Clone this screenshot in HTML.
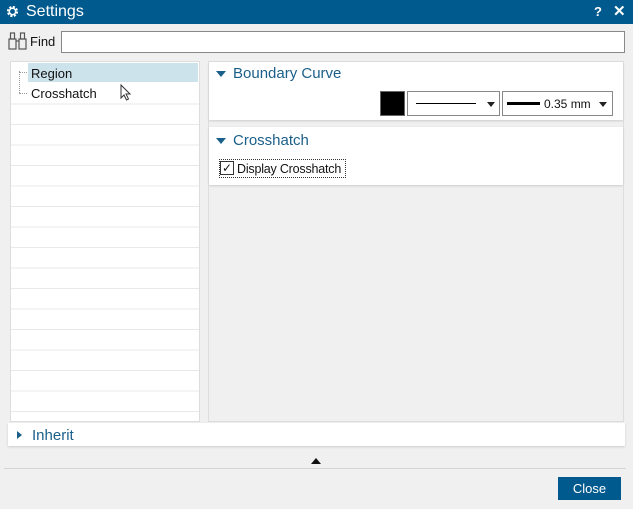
<!DOCTYPE html><html><head><style>
*{box-sizing:border-box;margin:0;padding:0}
body{width:633px;height:509px;background:#f0f0f0;font-family:"Liberation Sans",sans-serif;position:relative;overflow:hidden;font-size:12px;color:#111}
.a{position:absolute}
</style></head><body>
<div class="a" style="left:0;top:0;width:633px;height:24px;background:#005a8e;color:#fff">
<svg class="a" style="left:6px;top:5px" width="13" height="13" viewBox="0 0 13 13"><circle cx="6.5" cy="6.5" r="4.3" fill="none" stroke="#fff" stroke-width="2.6" stroke-dasharray="2 1.4"/><circle cx="6.5" cy="6.5" r="3.2" fill="none" stroke="#fff" stroke-width="1.5"/></svg>
<div class="a" style="left:26px;top:3px;font-size:16px">Settings</div>
<div class="a" style="left:594px;top:4px;font-size:13px;font-weight:bold">?</div>
<div class="a" style="left:613px;top:2px;font-size:15px;font-weight:bold">✕</div>
</div>
<svg class="a" style="left:8px;top:31px" width="20" height="19" viewBox="0 0 20 19" fill="none" stroke="#555" stroke-width="1.2"><rect x="1" y="8" width="7" height="10"/><rect x="11" y="8" width="7" height="10"/><rect x="2.5" y="2" width="4" height="6"/><rect x="12.5" y="2" width="4" height="6"/><path d="M8 10h3"/></svg>
<div class="a" style="left:30px;top:34px;font-size:13px">Find</div>
<div class="a" style="left:61px;top:31px;width:564px;height:22px;background:#fff;border:1px solid #888"></div>
<div class="a" style="left:10px;top:61px;width:190px;height:361px;background:#fff;border:1px solid #ddd;background-image:repeating-linear-gradient(#fff 0 19.5px,#e8e8e8 19.5px 20.5px);background-position:0 22px"></div>
<div class="a" style="left:11px;top:62px;width:188px;height:40px;background:#fff"></div>
<div class="a" style="left:28px;top:63px;width:170px;height:19px;background:#cde3ec"></div>
<div class="a" style="left:19px;top:71px;width:1px;height:22px;border-left:1px dotted #999"></div>
<div class="a" style="left:19px;top:72px;width:8px;border-top:1px dotted #999"></div>
<div class="a" style="left:19px;top:93px;width:8px;border-top:1px dotted #999"></div>
<div class="a" style="left:31px;top:66px;font-size:13px">Region</div>
<div class="a" style="left:31px;top:86px;font-size:13px">Crosshatch</div>
<svg class="a" style="left:120px;top:84px" width="12" height="17" viewBox="0 0 12 17"><path d="M1 1v13l3-3 2.5 5 2-1-2.5-5h4z" fill="#fff" stroke="#333"/></svg>
<div class="a" style="left:208px;top:61px;width:416px;height:361px;background:#f0f0f0;border:1px solid #ddd"></div>
<div class="a" style="left:209px;top:62px;width:414px;height:58px;background:#fff;box-shadow:0 1px 2px #ccc"></div>
<div class="a" style="left:216px;top:71px;width:0;height:0;border-left:5px solid transparent;border-right:5px solid transparent;border-top:6px solid #1a5f8a"></div>
<div class="a" style="left:233px;top:65px;font-size:15px;color:#1a5f8a">Boundary Curve</div>
<div class="a" style="left:380px;top:91px;width:25px;height:25px;background:#000;border:1px solid #666"></div>
<div class="a" style="left:407px;top:91px;width:93px;height:25px;background:#fff;border:1px solid #888"><div class="a" style="left:8px;top:11px;width:60px;border-top:1px solid #000"></div><div class="a" style="left:79px;top:10px;border-left:4px solid transparent;border-right:4px solid transparent;border-top:5px solid #222"></div></div>
<div class="a" style="left:502px;top:91px;width:111px;height:25px;background:#fff;border:1px solid #888"><div class="a" style="left:4px;top:10px;width:33px;border-top:3px solid #000"></div><div class="a" style="left:41px;top:5px;font-size:12px">0.35 mm</div><div class="a" style="left:96px;top:10px;border-left:4px solid transparent;border-right:4px solid transparent;border-top:5px solid #222"></div></div>
<div class="a" style="left:209px;top:127px;width:414px;height:58px;background:#fff;box-shadow:0 1px 2px #ccc"></div>
<div class="a" style="left:216px;top:138px;width:0;height:0;border-left:5px solid transparent;border-right:5px solid transparent;border-top:6px solid #1a5f8a"></div>
<div class="a" style="left:233px;top:132px;font-size:15px;color:#1a5f8a">Crosshatch</div>
<div class="a" style="left:219px;top:159px;width:127px;height:19px;border:1px dotted #333"></div>
<div class="a" style="left:220px;top:161px;width:14px;height:14px;border:1px solid #333;background:#fff;font-size:12px;line-height:12px;text-align:center">✓</div>
<div class="a" style="left:237px;top:162px;font-size:12.5px;letter-spacing:-0.2px">Display Crosshatch</div>
<div class="a" style="left:8px;top:423px;width:617px;height:23px;background:#fff;box-shadow:0 1px 2px #ccc"></div>
<div class="a" style="left:17px;top:431px;border-top:4px solid transparent;border-bottom:4px solid transparent;border-left:5px solid #1a5f8a"></div>
<div class="a" style="left:32px;top:427px;font-size:15px;color:#1a5f8a">Inherit</div>
<div class="a" style="left:311px;top:458px;border-left:5px solid transparent;border-right:5px solid transparent;border-bottom:6px solid #111"></div>
<div class="a" style="left:4px;top:468px;width:622px;border-top:1px solid #d4d4d4"></div>
<div class="a" style="left:558px;top:477px;width:63px;height:23px;background:#005a8e;color:#fff;font-size:13px;text-align:center;line-height:23px">Close</div>
</body></html>
